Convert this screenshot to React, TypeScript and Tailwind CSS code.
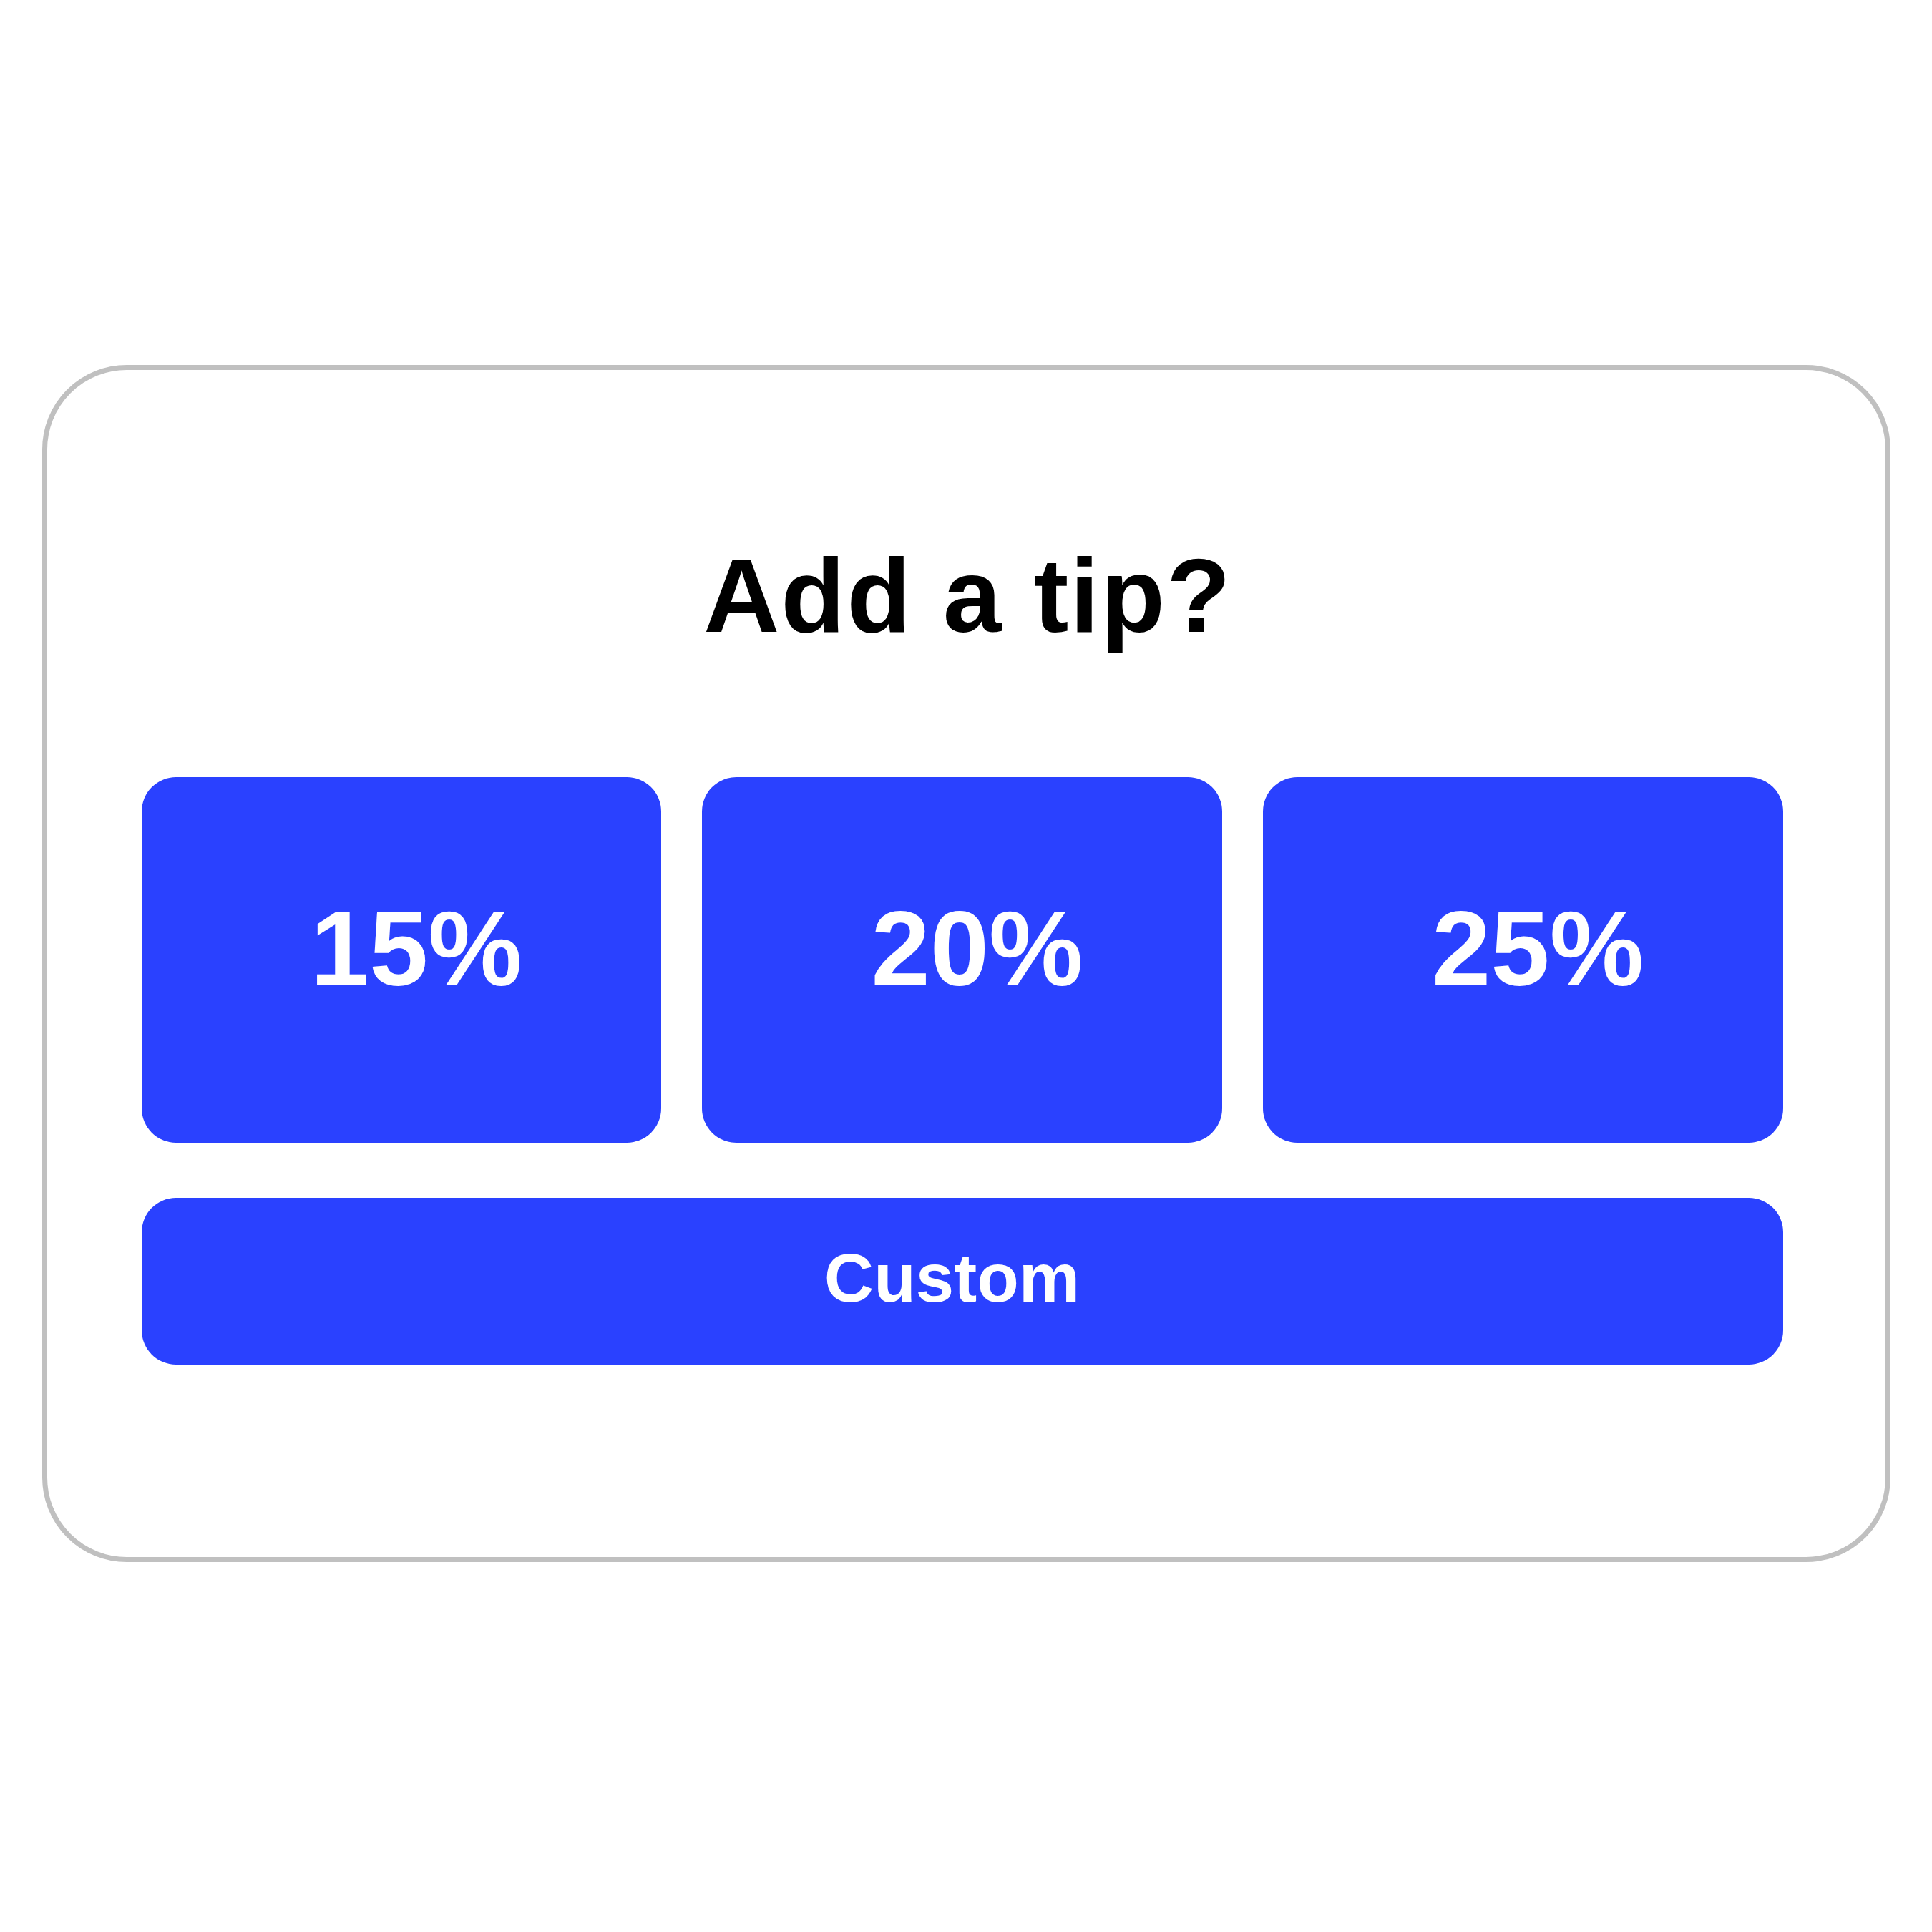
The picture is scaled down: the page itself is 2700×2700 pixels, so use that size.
export default function App() {
  const tips = ["15%", "20%", "25%"];
  return (
    <div className="flex h-[2700px] w-[2700px] items-start justify-center bg-white pt-[510px] font-['Liberation_Sans',Arial,sans-serif]">
      <div className="flex w-[2583px] flex-col rounded-[118px] border-[7px] border-[#c0c0c0] bg-white pb-[269px] pl-[132px] pr-[143px] pt-[242px]">
        <h1 className="pl-[16px] text-center text-[147px] font-bold leading-none tracking-[2px] text-black">Add a tip?</h1>
        <div className="mt-[180px] grid grid-cols-3 gap-[57px]">
          {tips.map((t) => (
            <button
              key={t}
              className="flex h-[511px] items-center justify-center rounded-[48px] bg-[#2a41ff] pb-[32px] pl-[42px] text-[148px] font-bold leading-none text-white"
            >
              {t}
            </button>
          ))}
        </div>
        <button className="mt-[77px] flex h-[233px] items-center justify-center rounded-[48px] bg-[#2a41ff] pb-[10px] pr-[28px] text-[96px] font-bold leading-none text-white">
          Custom
        </button>
      </div>
    </div>
  );
}
